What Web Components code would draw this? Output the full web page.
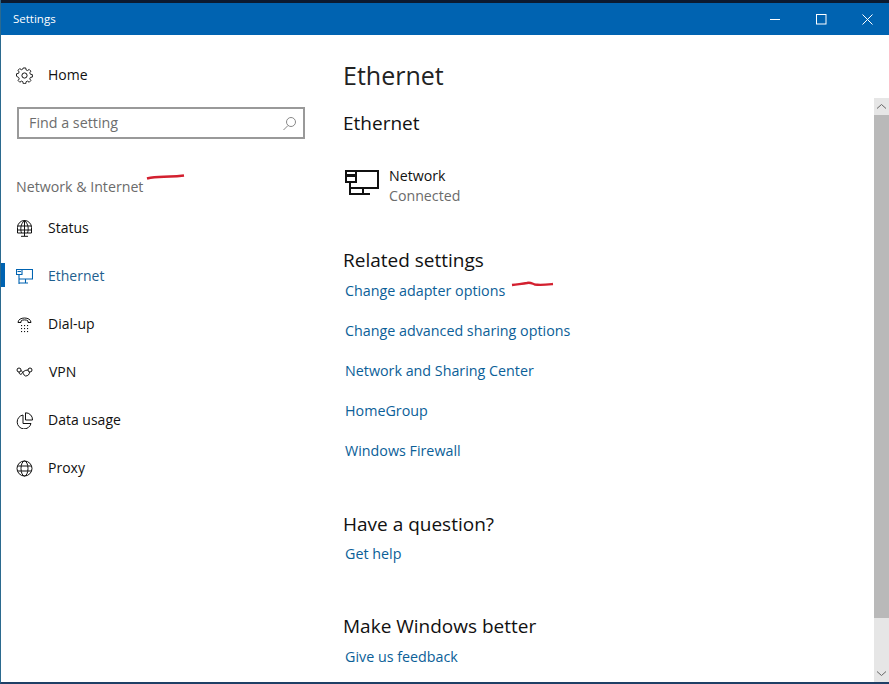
<!DOCTYPE html>
<html><head><meta charset="utf-8"><style>
html,body{margin:0;height:100%;background:#fff}
body{font-family:"Open Sans","Noto Sans",sans-serif}
</style></head><body>
<settings-window>
  <nav-pane slot="nav"></nav-pane>
  <content-pane slot="main"></content-pane>
</settings-window>
<script>
const icons={
home:'<g fill="none" stroke="currentColor" stroke-width="1"><circle cx="8.500" cy="8.500" r="2.600"/><path d="M7.200 1h2.600l.4 2.100 1.500.7 1.800-1.200 1.800 1.800-1.200 1.800.7 1.500 2.100.4v2.600l-2.100.4-.7 1.500 1.200 1.800-1.800 1.800-1.800-1.200-1.500.7-.4 2.100H7.200l-.4-2.100-1.500-.7-1.800 1.200-1.800-1.800 1.200-1.800-.7-1.500L0 9.800V7.200l2.100-.4.700-1.500L1.600 3.500l1.800-1.800 1.800 1.200 1.500-.7z" transform="translate(.5 0) scale(.94)"/></g>',
status:'<g fill="none" stroke="currentColor" stroke-width="1"><path d="M1.500 13V7.500a7 7 0 0 1 14 0V13z"/><path d="M1.500 6h14M1.500 10h14M8.500 .5V13M5.500 13c-1.300-4-1-9 3-12.500M11.500 13c1.300-4 1-9-3-12.500M8.500 13v3M5 16.300h7"/></g>',
eth:'<g fill="none" stroke="currentColor" stroke-width="1.100"><path d="M6 1.500h10.500V11H3M.5 1.500H6v5H.500zM3 6.500v9.500M3 15h9M9.500 11v4"/><path d="M1.500 3.500h3.500"/></g>',
dial:'<g fill="none" stroke="currentColor" stroke-width="1"><path d="M2 6.500C2 .5 15 .5 15 6.500h-3V5C11 3.500 6 3.500 5 5v1.500z"/></g><g fill="currentColor"><rect x="5" y="9" width="1.100" height="1.100"/><rect x="8" y="9" width="1.100" height="1.100"/><rect x="11" y="9" width="1.100" height="1.100"/><rect x="5" y="12" width="1.100" height="1.100"/><rect x="8" y="12" width="1.100" height="1.100"/><rect x="11" y="12" width="1.100" height="1.100"/><rect x="5" y="15" width="1.100" height="1.100"/><rect x="8" y="15" width="1.100" height="1.100"/><rect x="11" y="15" width="1.100" height="1.100"/></g>',
vpn:'<g fill="none" stroke="currentColor" stroke-width="1"><circle cx="3" cy="6" r="2"/><circle cx="14" cy="6" r="2"/><path d="M5 6.500c2 .5 2.500 5.500 4.500 5.500 2.500 0 4-1.500 4-4M3 8c0 2.500 2 3 3 1.500 1-1.500 2.500-3.500 6-3.500"/></g>',
data:'<g fill="none" stroke="currentColor" stroke-width="1"><path d="M7 3a7 7 0 1 0 8 8.500H7z"/><path d="M9.500 .8a6.800 6.800 0 0 1 7 7.200h-7z"/></g>',
proxy:'<g fill="none" stroke="currentColor" stroke-width="1"><circle cx="8.500" cy="8.500" r="7.500"/><ellipse cx="8.500" cy="8.500" rx="3.500" ry="7.500"/><path d="M1.500 6h14M1.500 11h14"/></g>'
};
class SettingsWindow extends HTMLElement{constructor(){super();this.attachShadow({mode:'open'}).innerHTML=`<style>
:host{display:flex;flex-direction:column;box-sizing:border-box;width:889px;height:684px;border-left:1px solid #2b6a8f;border-bottom:2px solid #1f3f66;position:relative;overflow:hidden;background:#fff}
.top{height:3px;background:#0c1a30;flex:none}
.bar{height:32px;flex:none;background:#0063b1;color:#fff;display:flex;align-items:center;font:11.500px "Open Sans",sans-serif;padding-left:12px}
.t{flex:1;margin-top:-1px}
.b{width:46px;height:32px;display:flex;align-items:center;justify-content:center}
.b svg{display:block}
.body{flex:1;display:flex;min-height:0}
.nav{width:342px;flex:none}
.main{flex:1;min-width:0}
.sb{width:15px;flex:none;margin-top:63px;background:#e6e6e6;display:flex;flex-direction:column}
.ar{height:17px;display:flex;align-items:center;justify-content:center;flex:none}
.th{height:503px;background:#b9b9b9;flex:none}
.sp{flex:1}
</style><div class="top"></div><div class="bar"><span class="t">Settings</span>
<span class="b"><svg width="11" height="11"><path d="M0 5.500h10" stroke="#fff"/></svg></span>
<span class="b"><svg width="11" height="11"><rect x=".5" y=".5" width="9.500" height="9.500" fill="none" stroke="#fff"/></svg></span>
<span class="b" style="margin-right:-1px"><svg width="11" height="11"><path d="M.5.500l10 10M10.500.500l-10 10" stroke="#fff" fill="none"/></svg></span></div>
<div class="body"><div class="nav"><slot name="nav"></slot></div><div class="main"><slot name="main"></slot></div>
<div class="sb"><div class="ar"><svg width="11" height="7"><path d="M1 5.500l4.500-4 4.500 4" fill="none" stroke="#666"/></svg></div><div class="th"></div><div class="sp"></div><div class="ar"><svg width="11" height="7"><path d="M1 1.500l4.500 4 4.500-4" fill="none" stroke="#666"/></svg></div></div></div>`}}
class NavItem extends HTMLElement{constructor(){super();const a=this.getAttribute('active')!==null,ic=this.getAttribute('icon');this.attachShadow({mode:'open'}).innerHTML=`<style>
:host{display:flex;align-items:center;height:48px;padding-left:15px;color:${a?'#1f5f8f':'#111'};font-size:14px;position:relative}
svg{width:17px;height:17px;flex:none;color:${a?'#0063b1':'#111'}}
span{margin-left:${ic==='vpn'?16:15}px;margin-top:-1px}
i{position:absolute;left:0;top:11px;width:4px;height:24px;background:#0063b1}
</style>${a?'<i></i>':''}<svg viewBox="0 0 17 17">${icons[ic]}</svg><span><slot></slot></span>`}}
class SearchBox extends HTMLElement{constructor(){super();this.attachShadow({mode:'open'}).innerHTML=`<style>
:host{display:flex;align-items:center;box-sizing:border-box;width:288px;height:32px;border:2px solid #999;margin:8px 0 0 16px;padding:0 6px 0 10px;font-size:14.300px;color:#6d6d6d}
span{flex:1;margin-top:-1px}
</style><span>Find a setting</span><svg width="15" height="15" viewBox="0 0 15 15"><circle cx="9" cy="6" r="4.500" fill="none" stroke="#888"/><path d="M6 9.500L1.500 14" stroke="#888" fill="none"/></svg>`}}
class NavPane extends HTMLElement{constructor(){super();this.attachShadow({mode:'open'}).innerHTML=`<style>
:host{display:block;position:relative;padding-top:16px}
.cat{font-size:14.200px;color:#6b6b6b;margin:36px 0 0 15px;height:23px;line-height:23px}
.list{margin-top:6px}
svg.r{position:absolute;left:145px;top:138px}
</style><nav-item icon="home">Home</nav-item>
<search-box></search-box>
<div class="cat">Network &amp; Internet</div>
<svg class="r" width="39" height="8"><path d="M1 5.500C10 3 18 4 24 3.500c4 0 9-.3 14-1" fill="none" stroke="#d3202f" stroke-width="2.400"/></svg>
<div class="list"><nav-item icon="status">Status</nav-item><nav-item icon="eth" active>Ethernet</nav-item><nav-item icon="dial">Dial-up</nav-item><nav-item icon="vpn">VPN</nav-item><nav-item icon="data">Data usage</nav-item><nav-item icon="proxy">Proxy</nav-item></div>`}}
class SetLink extends HTMLElement{constructor(){super();this.attachShadow({mode:'open'}).innerHTML=`<style>
:host{display:block;height:40px;line-height:20px;font-size:14.300px;color:#0b6098;margin-left:2px}
</style><slot></slot>`}}
class SubHead extends HTMLElement{constructor(){super();this.attachShadow({mode:'open'}).innerHTML=`<style>
:host{display:block;font-size:19px;line-height:26px;color:#111}
</style><slot></slot>`}}
class ContentPane extends HTMLElement{constructor(){super();this.attachShadow({mode:'open'}).innerHTML=`<style>
:host{display:block;position:relative;height:100%;overflow:hidden}
h1{font-weight:400;font-size:25px;line-height:36px;margin:22px 0 0;color:#222}
.e{margin-top:17px}
.net{display:flex;align-items:flex-start;margin:30px 0 0 2px;gap:8px;height:40px}
.net svg{flex:none;margin-top:3px}
.nt{font-size:14.200px;line-height:20px;color:#111}
.nt div+div{color:#6b6b6b}
.rel{margin-top:41px}
.links{margin-top:8px}
.q{margin-top:30px}
.m{margin-top:29px}
.g{margin-top:7px}
.g2{margin-top:8px}
svg.r{position:absolute;left:168px;top:245px}
</style><h1>Ethernet</h1><sub-head class="e">Ethernet</sub-head>
<div class="net"><svg width="36" height="28" viewBox="0 0 36 28"><g fill="none" stroke="#111" stroke-width="2"><path d="M11 2h22v17H6M1 2h10v11H1zM5 13v13M5 25h20M18 19v6"/></g><rect x="2" y="5" width="8" height="3" fill="#111"/></svg><div class="nt"><div>Network</div><div>Connected</div></div></div>
<sub-head class="rel">Related settings</sub-head>
<div class="links"><set-link>Change adapter options</set-link><set-link>Change advanced sharing options</set-link><set-link>Network and Sharing Center</set-link><set-link>HomeGroup</set-link><set-link>Windows Firewall</set-link></div>
<sub-head class="q">Have a question?</sub-head><set-link class="g">Get help</set-link>
<sub-head class="m">Make Windows better</sub-head><set-link class="g2">Give us feedback</set-link>
<svg class="r" width="44" height="8"><path d="M1 5C8 4 12 4 16 3c3-1 5 .5 8 1.500 5 1 9 .5 18-.5" fill="none" stroke="#d3202f" stroke-width="2.400"/></svg>`}}
customElements.define('settings-window',SettingsWindow);
customElements.define('nav-item',NavItem);
customElements.define('search-box',SearchBox);
customElements.define('nav-pane',NavPane);
customElements.define('set-link',SetLink);
customElements.define('sub-head',SubHead);
customElements.define('content-pane',ContentPane);
</script></body></html>
